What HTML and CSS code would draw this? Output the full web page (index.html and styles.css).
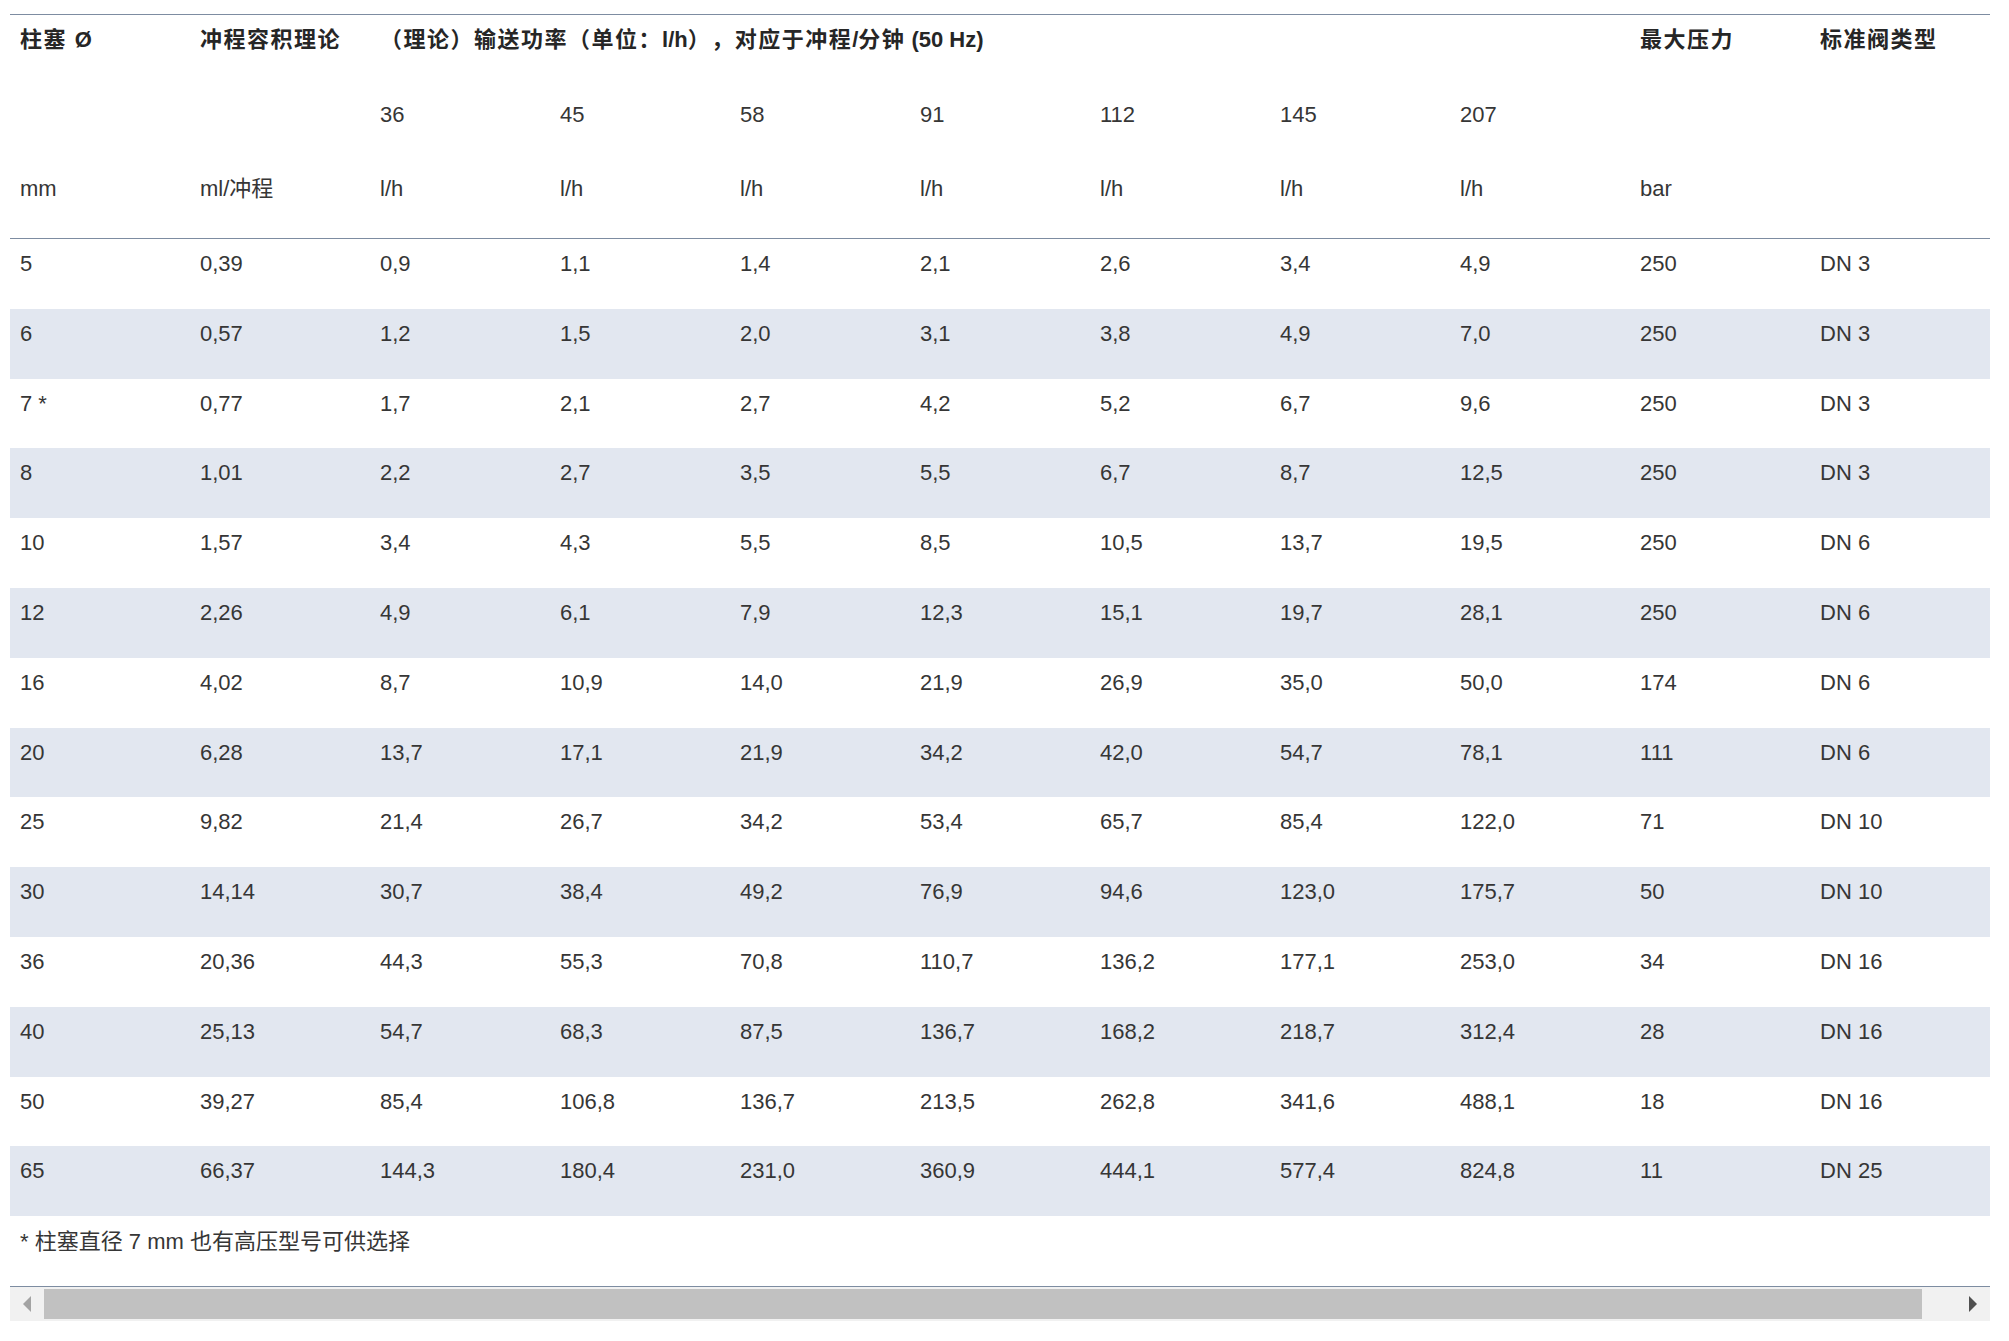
FILE: index.html
```html
<!DOCTYPE html>
<html lang="zh-CN">
<head>
<meta charset="utf-8">
<title>柱塞规格表</title>
<link rel="stylesheet" href="styles.css">
</head>
<body>
<div class="wrap">
  <div class="scroller">
    <table class="spec">
      <colgroup>
        <col><col><col><col><col><col><col><col><col><col><col>
      </colgroup>
      <thead>
        <tr class="h1">
          <th>柱塞 <span class="lat">Ø</span></th>
          <th>冲程容积理论</th>
          <th colspan="7">（理论）输送功率（单位：<span class="lat">l/h</span>），对应于冲程<span class="lat">/</span>分钟<span class="lat"> (50 Hz)</span></th>
          <th>最大压力</th>
          <th>标准阀类型</th>
        </tr>
        <tr class="h2">
          <td></td><td></td>
          <td>36</td><td>45</td><td>58</td><td>91</td><td>112</td><td>145</td><td>207</td>
          <td></td><td></td>
        </tr>
        <tr class="h3">
          <td>mm</td><td>ml/冲程</td>
          <td>l/h</td><td>l/h</td><td>l/h</td><td>l/h</td><td>l/h</td><td>l/h</td><td>l/h</td>
          <td>bar</td><td></td>
        </tr>
      </thead>
      <tbody>
        <tr><td>5</td><td>0,39</td><td>0,9</td><td>1,1</td><td>1,4</td><td>2,1</td><td>2,6</td><td>3,4</td><td>4,9</td><td>250</td><td>DN 3</td></tr>
        <tr><td>6</td><td>0,57</td><td>1,2</td><td>1,5</td><td>2,0</td><td>3,1</td><td>3,8</td><td>4,9</td><td>7,0</td><td>250</td><td>DN 3</td></tr>
        <tr><td>7 *</td><td>0,77</td><td>1,7</td><td>2,1</td><td>2,7</td><td>4,2</td><td>5,2</td><td>6,7</td><td>9,6</td><td>250</td><td>DN 3</td></tr>
        <tr><td>8</td><td>1,01</td><td>2,2</td><td>2,7</td><td>3,5</td><td>5,5</td><td>6,7</td><td>8,7</td><td>12,5</td><td>250</td><td>DN 3</td></tr>
        <tr><td>10</td><td>1,57</td><td>3,4</td><td>4,3</td><td>5,5</td><td>8,5</td><td>10,5</td><td>13,7</td><td>19,5</td><td>250</td><td>DN 6</td></tr>
        <tr><td>12</td><td>2,26</td><td>4,9</td><td>6,1</td><td>7,9</td><td>12,3</td><td>15,1</td><td>19,7</td><td>28,1</td><td>250</td><td>DN 6</td></tr>
        <tr><td>16</td><td>4,02</td><td>8,7</td><td>10,9</td><td>14,0</td><td>21,9</td><td>26,9</td><td>35,0</td><td>50,0</td><td>174</td><td>DN 6</td></tr>
        <tr><td>20</td><td>6,28</td><td>13,7</td><td>17,1</td><td>21,9</td><td>34,2</td><td>42,0</td><td>54,7</td><td>78,1</td><td>111</td><td>DN 6</td></tr>
        <tr><td>25</td><td>9,82</td><td>21,4</td><td>26,7</td><td>34,2</td><td>53,4</td><td>65,7</td><td>85,4</td><td>122,0</td><td>71</td><td>DN 10</td></tr>
        <tr><td>30</td><td>14,14</td><td>30,7</td><td>38,4</td><td>49,2</td><td>76,9</td><td>94,6</td><td>123,0</td><td>175,7</td><td>50</td><td>DN 10</td></tr>
        <tr><td>36</td><td>20,36</td><td>44,3</td><td>55,3</td><td>70,8</td><td>110,7</td><td>136,2</td><td>177,1</td><td>253,0</td><td>34</td><td>DN 16</td></tr>
        <tr><td>40</td><td>25,13</td><td>54,7</td><td>68,3</td><td>87,5</td><td>136,7</td><td>168,2</td><td>218,7</td><td>312,4</td><td>28</td><td>DN 16</td></tr>
        <tr><td>50</td><td>39,27</td><td>85,4</td><td>106,8</td><td>136,7</td><td>213,5</td><td>262,8</td><td>341,6</td><td>488,1</td><td>18</td><td>DN 16</td></tr>
        <tr><td>65</td><td>66,37</td><td>144,3</td><td>180,4</td><td>231,0</td><td>360,9</td><td>444,1</td><td>577,4</td><td>824,8</td><td>11</td><td>DN 25</td></tr>
      </tbody>
    </table>
    <p class="footnote">* 柱塞直径 7 mm 也有高压型号可供选择</p>
  </div>
  <div class="hscroll">
    <div class="sb-btn sb-left"><span class="tri tri-left"></span></div>
    <div class="sb-thumb"></div>
    <div class="sb-rest"></div>
    <div class="sb-btn sb-right"><span class="tri tri-right"></span></div>
  </div>
</div>
</body>
</html>
```

FILE: styles.css
```css
html, body {
  margin: 0;
  padding: 0;
  background: #ffffff;
}

body {
  font-family: "Liberation Sans", "Noto Sans CJK SC", sans-serif;
  font-size: 22px;
  color: #363636;
  text-spacing-trim: space-all;
}

.wrap {
  width: 1980px;
  margin: 14px 0 0 10px;
}

.scroller {
  border-top: 1px solid #7d8ca1;
  border-bottom: 1px solid #7d8ca1;
}

.spec {
  width: 1980px;
  table-layout: fixed;
  border-collapse: collapse;
  border-spacing: 0;
}

.spec col {
  width: 180px;
}

.spec th,
.spec td {
  padding: 10px 10px 0 10px;
  line-height: 30px;
  text-align: left;
  vertical-align: top;
  white-space: nowrap;
  font-weight: normal;
}

.spec th {
  font-weight: bold;
  color: #262626;
  letter-spacing: 1.5px;
}

.spec th .lat {
  letter-spacing: 0;
}

.spec thead tr {
  height: 74.67px;
}

.spec thead tr.h3 td {
  border-bottom: 1px solid #7d8ca1;
}

.spec tbody tr {
  height: 69.8px;
}

.spec tbody tr:nth-child(even) {
  background: #e2e7f0;
}

.footnote {
  margin: 0;
  height: 59px;
  padding: 11px 10px 0 10px;
  line-height: 30px;
  white-space: nowrap;
}

.hscroll {
  display: flex;
  height: 34px;
  background: #f1f1f1;
}

.sb-btn {
  flex: 0 0 34px;
  display: flex;
  align-items: center;
  justify-content: center;
}

.sb-thumb {
  flex: 0 0 1878px;
  margin: 2px 0;
  background: #c1c1c1;
}

.sb-rest {
  flex: 1 1 auto;
}

.tri {
  width: 0;
  height: 0;
  border-top: 8px solid transparent;
  border-bottom: 8px solid transparent;
}

.tri-left {
  border-right: 8px solid #a3a3a3;
}

.tri-right {
  border-left: 8px solid #505050;
}
```
